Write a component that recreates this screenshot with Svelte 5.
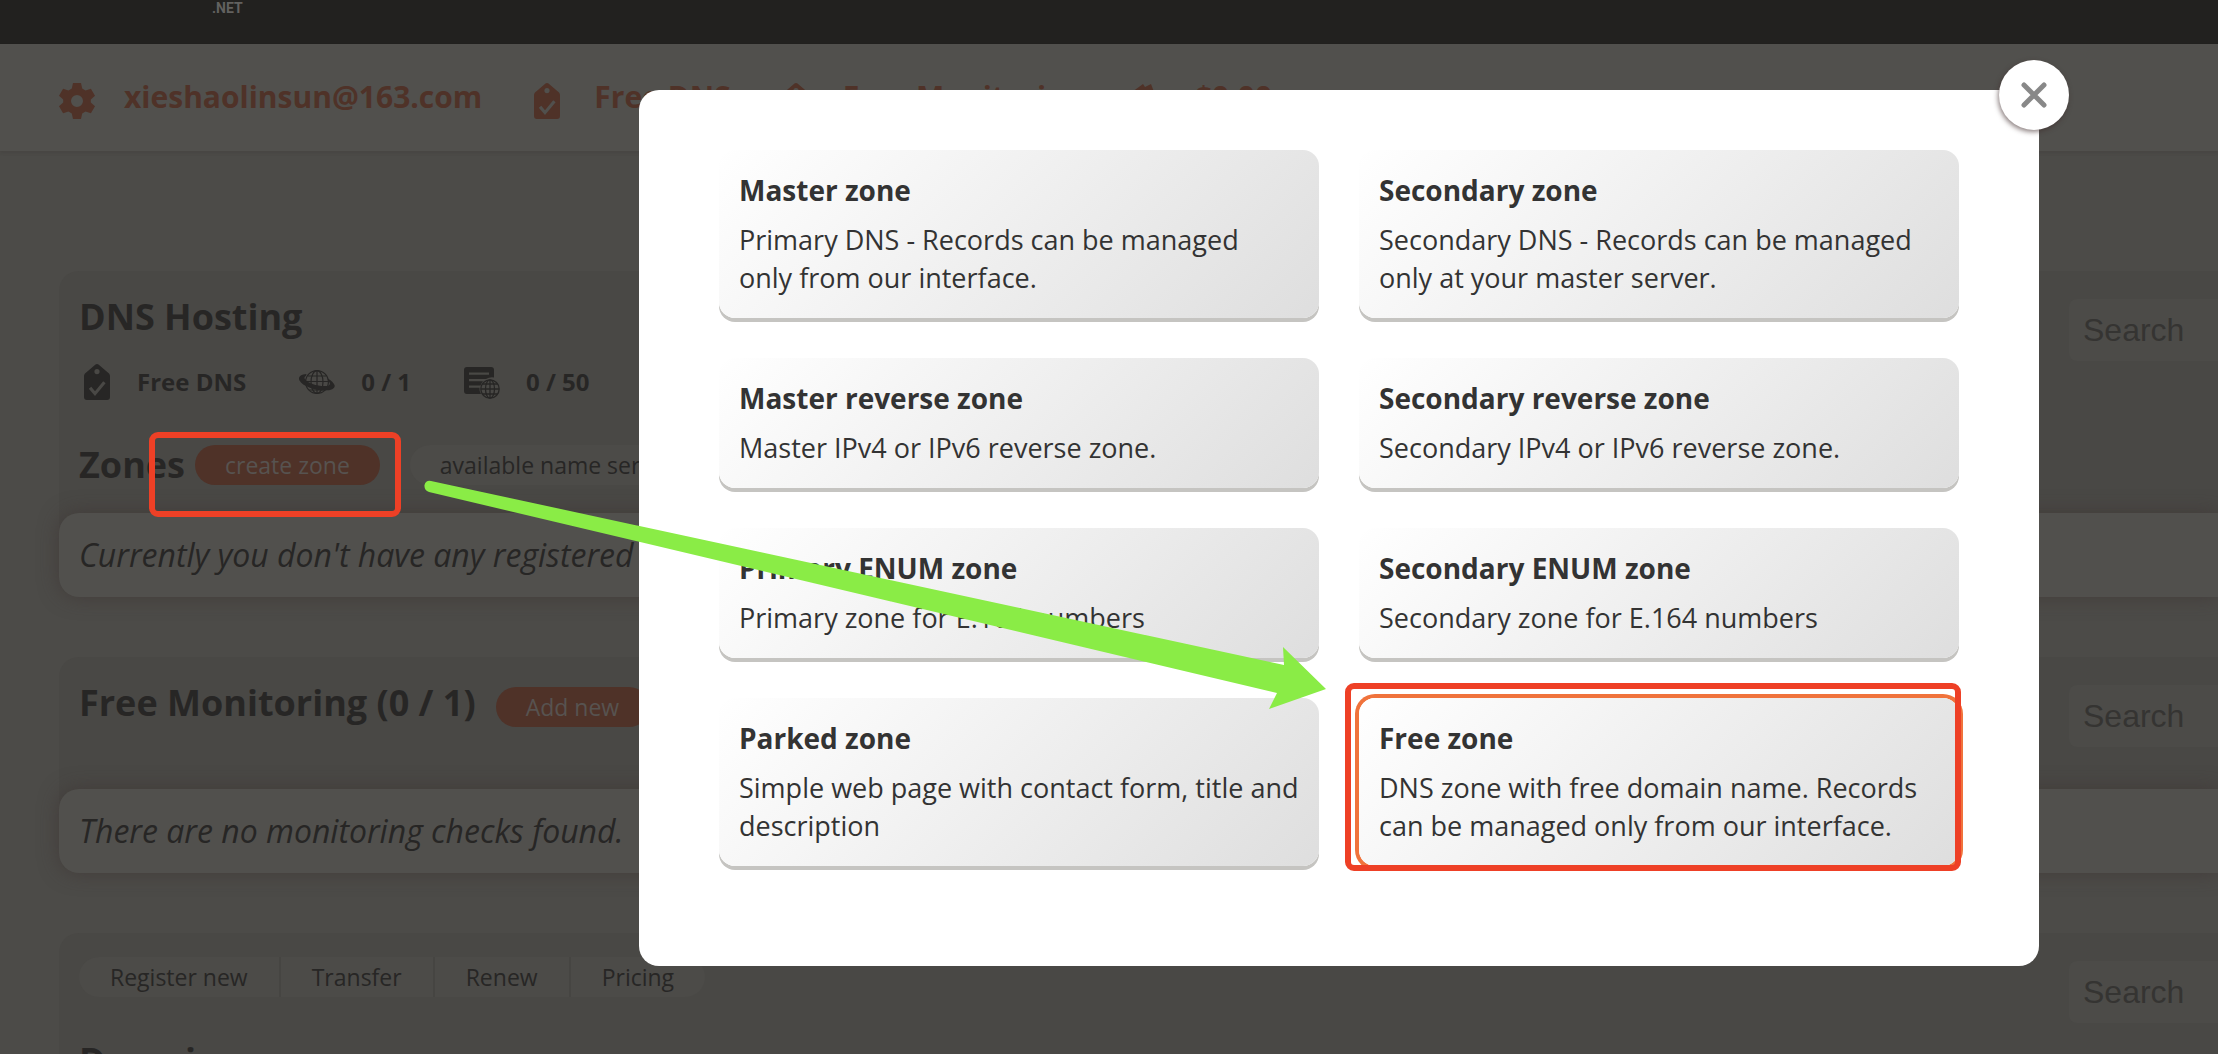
<script>
  const zones = [
    { title: 'Master zone', text: 'Primary DNS - Records can be managed only\u00a0from our interface.' },
    { title: 'Secondary zone', text: 'Secondary DNS - Records can be managed only at your master server.' },
    { title: 'Master reverse zone', text: 'Master IPv4 or IPv6 reverse zone.' },
    { title: 'Secondary reverse zone', text: 'Secondary IPv4 or IPv6 reverse zone.' },
    { title: 'Primary ENUM zone', text: 'Primary zone for E.164 numbers' },
    { title: 'Secondary ENUM zone', text: 'Secondary zone for E.164 numbers' },
    { title: 'Parked zone', text: 'Simple web page with contact form, title and description' },
    { title: 'Free zone', text: 'DNS zone with free domain name. Records can be managed only from our interface.', active: true },
  ];
  const account = [
    { icon: 'gear', label: 'xieshaolinsun@163.com' },
    { icon: 'tag', label: 'Free DNS' },
    { icon: 'tag', label: 'Free Monitoring' },
    { icon: 'wallet', label: '$0.00' },
  ];
  const stats = [
    { icon: 'tag', label: 'Free DNS' },
    { icon: 'globe', label: '0 / 1' },
    { icon: 'records', label: '0 / 50' },
  ];
  const domainTabs = ['Register new', 'Transfer', 'Renew', 'Pricing'];
</script>

{#snippet icon(name)}
  {#if name === 'gear'}
    <svg class="icon" viewBox="0 0 36 36" aria-hidden="true">
      <path
        fill="currentColor"
        fill-rule="evenodd"
        d="M14 0h8l1.2 5.600 3.300 1.900 5.400-1.800 4.100 7-4.200 3.800v3l4.200 3.800-4.100 7-5.400-1.800-3.300 1.900L22 36h-8l-1.200-5.600-3.300-1.900-5.400 1.800-4.100-7 4.200-3.800v-3L0 12.700l4.100-7 5.400 1.800 3.300-1.900zM18 12a6 6 0 1 0 0 12 6 6 0 0 0 0-12z"
      />
    </svg>
  {:else if name === 'tag'}
    <svg class="icon tag" viewBox="4 0 28 36" aria-hidden="true">
      <path
        fill="currentColor"
        fill-rule="evenodd"
        d="M16.500.5q1.500-1 3 0L30 9.500q1 1 1 2.500V33q0 3-3 3H8q-3 0-3-3V12q0-1.500 1-2.500zM18 5a2.600 2.600 0 1 0 0 5.200A2.600 2.600 0 0 0 18 5zM24.200 17.200l-8.200 10-3.700-4.500-2.500 2 6.200 7.300L26.600 19.200z"
      />
    </svg>
  {:else if name === 'wallet'}
    <svg class="icon" viewBox="0 0 36 36" aria-hidden="true">
      <path fill="currentColor" d="M2 9 13 1l2 3 6-3 3 8h6q3 0 3 3v20q0 3-3 3H4q-3 0-3-3V11q0-1 1-2z" />
    </svg>
  {:else if name === 'globe'}
    <svg class="icon" viewBox="0 0 36 36" aria-hidden="true">
      <g fill="none" stroke="currentColor" stroke-width="1.200">
        <circle cx="18" cy="18" r="11.400" />
        <ellipse cx="18" cy="18" rx="6" ry="11.400" />
        <path d="M18 6.500v23M7 17.500h22M9 12h18M10 26h16" />
      </g>
      <path
        fill="currentColor"
        d="M7.500 10C1 10.500-1 13.500.5 16.500 3.500 22 15 26.500 26 26.500c7 0 10.500-2.300 9.500-5.500-.7-2-3-4.500-7-6.500l.5 2c2 2 2.500 3.700 1 4.700-2.500 1.600-10.500 1-16.500-1.200C6.500 17.500 3.500 13.500 6.800 12z"
      />
    </svg>
  {:else}
    <svg class="icon" viewBox="0 0 36 36" aria-hidden="true">
      <path
        fill="currentColor"
        fill-rule="evenodd"
        d="M3 3h24q3 0 3 3v7.500a11.500 11.500 0 0 0-8 1.500H5v2.200h14a11.500 11.500 0 0 0-2.500 4.300H5v2.300h10.500Q15 27 17 30H3q-3 0-3-3V6q0-3 3-3zM5 8.500v2.200h20V8.500z"
      />
      <g fill="none" stroke="currentColor" stroke-width="1.300">
        <circle cx="26" cy="25" r="9.200" />
        <ellipse cx="26" cy="25" rx="4.500" ry="9.200" />
        <path d="M26 16v18M17 25h18M18.500 20h15M18.500 30h15" />
      </g>
    </svg>
  {/if}
{/snippet}

<div class="page">
  <header class="topbar"><span>.NET</span></header>

  <nav class="account">
    {#each account as item}
      <a href="#account">{@render icon(item.icon)}<span>{item.label}</span></a>
    {/each}
  </nav>

  <main>
    <section>
      <div class="head hosting">
        <div class="info">
          <h2>DNS Hosting</h2>
          <div class="stats">
            {#each stats as item}
              <div class="stat">{@render icon(item.icon)}<span>{item.label}</span></div>
            {/each}
          </div>
          <div class="zones">
            <h2>Zones</h2>
            <button class="pill primary">create zone</button>
            <button class="pill servers">available name servers</button>
          </div>
        </div>
        <input type="search" placeholder="Search" aria-label="Search zones" />
      </div>
      <p class="empty">Currently you don't have any registered zones.</p>
    </section>

    <section>
      <div class="head tall">
        <div class="info">
          <div class="monitoring">
            <h2>Free Monitoring (0 / 1)</h2>
            <button class="pill primary">Add new</button>
          </div>
        </div>
        <input type="search" placeholder="Search" aria-label="Search monitoring checks" />
      </div>
      <p class="empty">There are no monitoring checks found.</p>
    </section>

    <section>
      <div class="head">
        <div class="info">
          <div class="tabs">
            {#each domainTabs as tab}
              <button>{tab}</button>
            {/each}
          </div>
          <h2 class="domains">Domains</h2>
        </div>
        <input type="search" placeholder="Search" aria-label="Search domains" />
      </div>
    </section>
  </main>
</div>

<div class="overlay">
  <div class="modal" role="dialog" aria-modal="true" aria-label="Create zone">
    <button class="close" aria-label="Close">
      <svg viewBox="0 0 26 26" aria-hidden="true"><path d="M3 3l20 20M23 3 3 23" /></svg>
    </button>
    <div class="grid">
      {#each zones as zone}
        <button class="card" class:active={zone.active}>
          <strong>{zone.title}</strong>
          <span>{zone.text}</span>
        </button>
      {/each}
    </div>
  </div>
</div>

<!-- Guide marks over the page: two frames and an arrow between them -->
<svg class="marks" aria-hidden="true">
  <rect x="152" y="435" width="246" height="79" rx="6" />
  <rect x="1348" y="686" width="610" height="182" rx="6" />
  <path d="M431 481 1284 665 1283 647 1326 689 1269 709 1277 693 429 492Q424 490 424.500 485 426 480 431 481z" />
</svg>

<style>
  :global(body) {
    margin: 0;
    background: #4c4b48;
    overflow: hidden;
  }
  .page,
  .overlay {
    font-family: 'Open Sans', 'Noto Sans', sans-serif;
  }
  button,
  input {
    font: inherit;
    border: 0;
    margin: 0;
    cursor: pointer;
  }
  h2,
  p {
    margin: 0;
  }
  .page {
    height: 100vh;
    overflow: hidden;
    color: #272625;
  }
  .topbar {
    height: 44px;
    box-sizing: border-box;
    padding-left: 212px;
    background: #22211f;
    color: #62615f;
    font: bold 14px/17px Roboto, sans-serif;
  }
  .account {
    display: flex;
    align-items: center;
    gap: 47px;
    height: 105px;
    padding: 0 0 2px 59px;
    background: #51504d;
    box-shadow: 0 2px 3px rgba(60, 56, 54, 0.3);
  }
  .account a {
    display: flex;
    align-items: center;
    gap: 29px;
    color: #4f3228;
    font-size: 30px;
    line-height: 38px;
    font-weight: 700;
    text-decoration: none;
    white-space: nowrap;
  }
  .account .icon {
    margin-top: 8px;
  }
  .icon {
    width: 36px;
    height: 36px;
    flex: none;
  }
  main {
    display: flex;
    flex-direction: column;
    gap: 60px;
    padding: 120px 0 0 59px;
  }
  section {
    border-radius: 20px 0 0 20px;
    background: #494845;
  }
  .head {
    display: flex;
    justify-content: space-between;
    align-items: flex-start;
    padding: 24px 0 28px 20px;
  }
  .head.hosting {
    padding-bottom: 26px;
  }
  .head.tall {
    padding-bottom: 42px;
  }
  h2 {
    font-size: 36px;
    line-height: 44px;
    font-weight: 700;
  }
  .stats {
    display: flex;
    gap: 53px;
    margin-top: 25px;
    padding-left: 4px;
  }
  .stat {
    display: flex;
    align-items: center;
    gap: 26px;
    font-size: 24px;
    line-height: 36px;
    font-weight: 700;
  }
  .stat .tag {
    width: 28px;
  }
  .zones {
    display: flex;
    align-items: center;
    gap: 10px;
    margin-top: 43px;
  }
  .monitoring {
    display: flex;
    align-items: baseline;
    gap: 20px;
  }
  .pill {
    height: 40px;
    padding: 0 30px;
    border-radius: 20px;
    background: #4c4b48;
    color: #272625;
    font-size: 23px;
    line-height: 40px;
  }
  .primary {
    background: #4f3228;
    color: #575350;
  }
  .servers {
    margin-left: 20px;
  }
  input {
    width: 149px;
    height: 62px;
    box-sizing: border-box;
    margin-top: 4px;
    padding: 0 0 0 14px;
    border-radius: 8px 0 0 8px;
    background: #4c4b48;
    color: #272625;
    font: 32px 'Liberation Sans', sans-serif;
    appearance: none;
  }
  input::placeholder {
    color: #353432;
    opacity: 1;
  }
  .empty {
    padding: 22px 20px;
    border-radius: 20px 0 0 20px;
    background: #51504d;
    box-shadow: 0 0 20px rgba(60, 50, 48, 0.6);
    font-size: 32px;
    line-height: 40px;
    font-style: italic;
  }
  .tabs {
    display: flex;
  }
  .tabs button {
    height: 40px;
    padding: 0 31px;
    background: #4c4b48;
    color: #272625;
    font-size: 23px;
    line-height: 40px;
  }
  .tabs button + button {
    border-left: 2px solid #464542;
  }
  .tabs button:first-child {
    border-radius: 20px 0 0 20px;
  }
  .tabs button:last-child {
    border-radius: 0 20px 20px 0;
  }
  .domains {
    margin-top: 42px;
  }
  .overlay {
    position: fixed;
    inset: 0;
    padding: 90px 179px 0 639px;
  }
  .modal {
    position: relative;
    padding: 60px 80px 100px;
    border-radius: 20px;
    background: #fff;
  }
  .close {
    position: absolute;
    top: -30px;
    right: -30px;
    display: grid;
    place-items: center;
    width: 70px;
    height: 70px;
    padding: 0;
    border-radius: 50%;
    background: #fff;
    box-shadow: -1px 2px 5px rgba(60, 40, 40, 0.6);
  }
  .close svg {
    width: 26px;
    height: 26px;
    fill: none;
    stroke: #888;
    stroke-width: 5;
    stroke-linecap: round;
  }
  .grid {
    display: grid;
    grid-template-columns: 1fr 1fr;
    gap: 40px;
  }
  .card {
    display: flex;
    flex-direction: column;
    gap: 11px;
    padding: 20px 20px 21px;
    border-radius: 16px;
    background: linear-gradient(135deg, #fff, #dedede);
    box-shadow: 0 4px 0 #c5c4c1;
    color: #333;
    text-align: left;
  }
  .card.active {
    box-shadow: 0 0 0 4px #f0733c;
  }
  .card strong {
    font-size: 28px;
    line-height: 40px;
  }
  .card span {
    font-size: 27px;
    line-height: 38px;
  }
  .marks {
    position: fixed;
    inset: 0;
    width: 100%;
    height: 100%;
    pointer-events: none;
  }
  .marks rect {
    fill: none;
    stroke: #ee4026;
    stroke-width: 6;
  }
  .marks path {
    fill: #8aec46;
  }
</style>
